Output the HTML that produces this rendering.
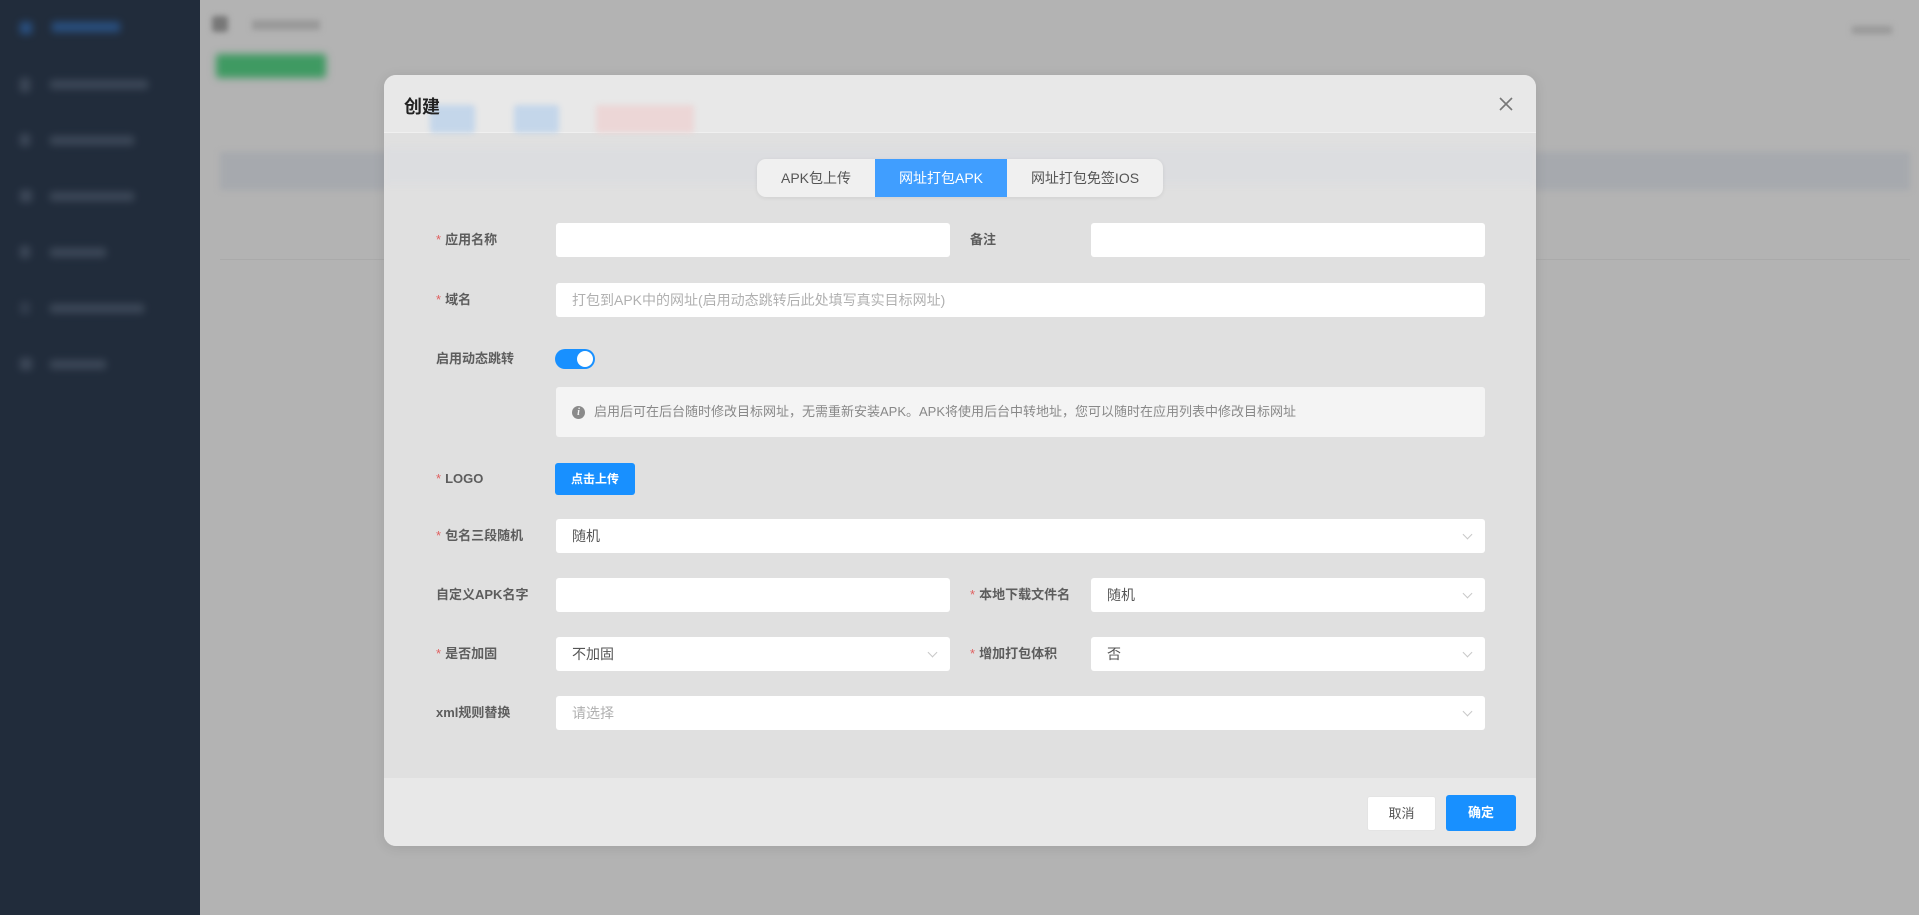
<!DOCTYPE html>
<html><head><meta charset="utf-8"><style>
*{box-sizing:border-box;margin:0;padding:0}
body{width:1919px;height:915px;overflow:hidden;background:#b3b3b3;font-family:"Liberation Sans","Noto Sans CJK SC",sans-serif;position:relative}
.a{position:absolute}
.side{left:0;top:0;width:200px;height:915px;background:#212c3b}
.bl{filter:blur(3px)}
.side .bl{opacity:.7;filter:blur(4px)}
.modal{left:384px;top:75px;width:1152px;height:771px;border-radius:12px;background:#e0e0e0;overflow:hidden;box-shadow:0 2px 12px rgba(0,0,0,.1)}
.hdr{left:0;top:0;width:1152px;height:58px;background:#e8e8e8;border-bottom:1px solid #f0f0f0}
.ftr{left:0;top:703px;width:1152px;height:68px;background:#e8e8e8}
.lbl{font-size:13px;font-weight:bold;color:#5d5d5d;height:34px;line-height:34px}
.lbl i{color:#e06060;font-style:normal;font-weight:normal;margin-right:4px}
.inp{background:#fff;border-radius:3px;height:34px;font-size:14px;color:#555;line-height:34px;padding-left:16px}
.ph{color:#b0b0b0}
.arr{position:absolute;right:14px;top:12px;width:7px;height:7px;border-right:1px solid #c8c8c8;border-bottom:1px solid #c8c8c8;transform:rotate(45deg)}
</style></head><body>
<div class="a side">
  <div class="a bl" style="left:20px;top:22px;width:12px;height:12px;background:#2d5f9e"></div>
  <div class="a bl" style="left:52px;top:22px;width:68px;height:10px;background:#2d5f9e"></div>
  <div class="a bl" style="left:20px;top:78px;width:10px;height:14px;background:#4a5566"></div><div class="a bl" style="left:50px;top:80px;width:98px;height:9px;background:#4a5566"></div>
  <div class="a bl" style="left:20px;top:134px;width:10px;height:12px;background:#4a5566"></div><div class="a bl" style="left:50px;top:136px;width:84px;height:9px;background:#4a5566"></div>
  <div class="a bl" style="left:20px;top:190px;width:12px;height:12px;background:#4a5566"></div><div class="a bl" style="left:50px;top:192px;width:84px;height:9px;background:#4a5566"></div>
  <div class="a bl" style="left:20px;top:246px;width:10px;height:12px;background:#4a5566"></div><div class="a bl" style="left:50px;top:248px;width:56px;height:9px;background:#4a5566"></div>
  <div class="a bl" style="left:20px;top:302px;width:10px;height:12px;background:#3a4556"></div><div class="a bl" style="left:50px;top:304px;width:94px;height:9px;background:#4a5566"></div>
  <div class="a bl" style="left:20px;top:358px;width:12px;height:12px;background:#4a5566"></div><div class="a bl" style="left:50px;top:360px;width:56px;height:9px;background:#4a5566"></div>
</div>
<div class="a bl" style="left:212px;top:16px;width:16px;height:16px;background:#777;border-radius:3px"></div>
<div class="a bl" style="left:252px;top:20px;width:68px;height:10px;background:#999"></div>
<div class="a" style="left:216px;top:54px;width:110px;height:24px;background:#3f9a62;border-radius:3px;filter:blur(4px)"></div>
<div class="a bl" style="left:1852px;top:26px;width:40px;height:8px;background:#999"></div>
<div class="a bl" style="left:220px;top:152px;width:1690px;height:38px;background:#a6a9ae"></div>
<div class="a" style="left:220px;top:190px;width:1690px;height:70px;border-bottom:1px solid #aaa"></div>

<div class="a modal">
  <div class="a hdr"></div>
  <div class="a bl" style="left:46px;top:30px;width:45px;height:28px;background:#c4d6ea;border-radius:3px"></div>
  <div class="a bl" style="left:130px;top:30px;width:45px;height:28px;background:#c4d6ea;border-radius:3px"></div>
  <div class="a bl" style="left:212px;top:30px;width:98px;height:28px;background:#ecd6d6;border-radius:3px"></div>
  <div class="a" style="left:20px;top:18px;font-size:18px;font-weight:bold;color:#222">创建</div>
  <svg class="a" style="left:1114px;top:21px" width="16" height="16" viewBox="0 0 16 16"><path d="M2 2L14 14M14 2L2 14" stroke="#777" stroke-width="1.6"/></svg>
  <div class="a bl" style="left:0;top:72px;width:1152px;height:38px;background:#dcdde0"></div>
  <div class="a" style="left:373px;top:84px;width:406px;height:38px;border-radius:9px;background:#f0f0f0;overflow:hidden;font-size:14px;color:#555;box-shadow:0 1px 4px rgba(0,0,0,.08)">
    <div class="a" style="left:0;top:0;width:118px;height:38px;line-height:38px;text-align:center">APK包上传</div>
    <div class="a" style="left:118px;top:0;width:132px;height:38px;line-height:38px;text-align:center;background:#409eff;color:#fff">网址打包APK</div>
    <div class="a" style="left:250px;top:0;width:156px;height:38px;line-height:38px;text-align:center">网址打包免签IOS</div>
  </div>

  <div class="a lbl" style="left:52px;top:148px"><i>*</i>应用名称</div>
  <div class="a inp" style="left:172px;top:148px;width:394px"></div>
  <div class="a lbl" style="left:586px;top:148px">备注</div>
  <div class="a inp" style="left:707px;top:148px;width:394px"></div>

  <div class="a lbl" style="left:52px;top:208px"><i>*</i>域名</div>
  <div class="a inp ph" style="left:172px;top:208px;width:929px">打包到APK中的网址(启用动态跳转后此处填写真实目标网址)</div>

  <div class="a lbl" style="left:52px;top:267px">启用动态跳转</div>
  <div class="a" style="left:171px;top:274px;width:40px;height:20px;border-radius:10px;background:#1890ff"><div class="a" style="left:22px;top:2px;width:16px;height:16px;border-radius:50%;background:#fff"></div></div>

  <div class="a" style="left:172px;top:312px;width:929px;height:50px;background:#f4f4f4;border-radius:3px;font-size:13px;color:#888;line-height:50px;padding-left:38px">
    <div class="a" style="left:16px;top:19px;width:13px;height:13px;border-radius:50%;background:#8a8a8a;color:#f4f4f4;font-size:10px;line-height:13px;text-align:center;font-style:italic;font-weight:bold;font-family:'Liberation Serif',serif">i</div>
    启用后可在后台随时修改目标网址，无需重新安装APK。APK将使用后台中转地址，您可以随时在应用列表中修改目标网址</div>

  <div class="a lbl" style="left:52px;top:387px"><i>*</i>LOGO</div>
  <div class="a" style="left:171px;top:388px;width:80px;height:32px;background:#1890ff;border-radius:3px;color:#fff;font-size:12px;font-weight:bold;line-height:32px;text-align:center">点击上传</div>

  <div class="a lbl" style="left:52px;top:444px"><i>*</i>包名三段随机</div>
  <div class="a inp" style="left:172px;top:444px;width:929px">随机<div class="arr"></div></div>

  <div class="a lbl" style="left:52px;top:503px">自定义APK名字</div>
  <div class="a inp" style="left:172px;top:503px;width:394px"></div>
  <div class="a lbl" style="left:586px;top:503px"><i>*</i>本地下载文件名</div>
  <div class="a inp" style="left:707px;top:503px;width:394px">随机<div class="arr"></div></div>

  <div class="a lbl" style="left:52px;top:562px"><i>*</i>是否加固</div>
  <div class="a inp" style="left:172px;top:562px;width:394px">不加固<div class="arr"></div></div>
  <div class="a lbl" style="left:586px;top:562px"><i>*</i>增加打包体积</div>
  <div class="a inp" style="left:707px;top:562px;width:394px">否<div class="arr"></div></div>

  <div class="a lbl" style="left:52px;top:621px">xml规则替换</div>
  <div class="a inp ph" style="left:172px;top:621px;width:929px">请选择<div class="arr"></div></div>

  <div class="a ftr"></div>
  <div class="a" style="left:983px;top:721px;width:69px;height:35px;background:#fff;border-radius:3px;border:1px solid #e4e4e4;font-size:13px;color:#555;line-height:33px;text-align:center">取消</div>
  <div class="a" style="left:1062px;top:720px;width:70px;height:36px;background:#1890ff;border-radius:3px;font-size:13px;font-weight:bold;color:#fff;line-height:36px;text-align:center">确定</div>
</div>
</body></html>
